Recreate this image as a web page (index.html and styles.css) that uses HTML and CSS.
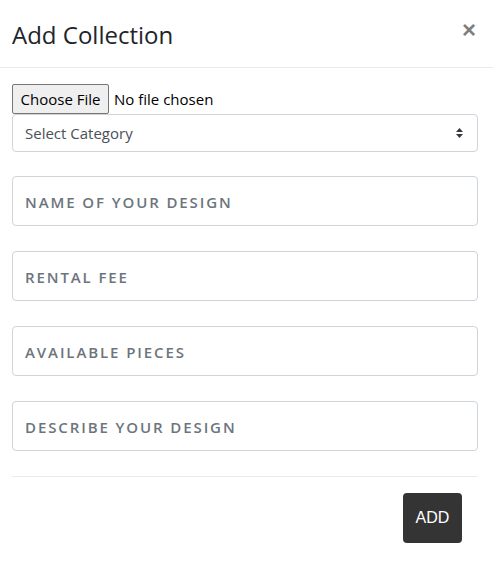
FILE: index.html
```html
<!DOCTYPE html>
<html>
<head>
<meta charset="utf-8">
<link rel="stylesheet" href="styles.css">
</head>
<body>
<div class="modal">
  <div class="modal-header">
    <h5 class="modal-title">Add Collection</h5>
    <button class="close" type="button">&times;</button>
  </div>
  <div class="modal-body">
    <div class="file-row">
      <span class="file-btn">Choose File</span>
      <span class="file-text">No file chosen</span>
    </div>
    <div class="select">
      <span>Select Category</span>
      <svg class="arrows" width="7" height="10" viewBox="0 0 7 10"><path d="M3.5 0 L7 4 H0 Z M0 6 H7 L3.5 10 Z" fill="#343a40"/></svg>
    </div>
    <div class="field first">NAME OF YOUR DESIGN</div>
    <div class="field">RENTAL FEE</div>
    <div class="field">AVAILABLE PIECES</div>
    <div class="field">DESCRIBE YOUR DESIGN</div>
    <div class="footer">
      <button class="add" type="button">ADD</button>
    </div>
  </div>
</div>
</body>
</html>
```

FILE: styles.css
```css
* { box-sizing: border-box; }
html, body { margin: 0; padding: 0; background: #fff; }
body {
  font-family: "Open Sans", "Noto Sans", sans-serif;
  color: #212529;
}
.modal { width: 493px; }
.modal-header {
  display: flex;
  justify-content: space-between;
  align-items: flex-start;
  height: 68px;
  padding: 17px 12px 0 12px;
  border-bottom: 1px solid #e9ecef;
}
.modal-title {
  margin: 0;
  font-size: 24px;
  font-weight: 500;
  line-height: 36px;
  color: #212529;
}
.close {
  border: 0;
  background: none;
  padding: 0;
  margin: -1px 5px 0 0;
  font-family: "Liberation Sans", sans-serif;
  font-size: 24px;
  font-weight: 700;
  line-height: 28px;
  color: #000;
  opacity: .5;
}
.modal-body { padding: 16px 15px 0 12px; }
.file-row {
  display: flex;
  align-items: center;
  height: 30px;
  font-size: 15px;
}
.file-btn {
  height: 30px;
  width: 97px;
  display: flex;
  align-items: center;
  justify-content: center;
  background: #efefef;
  border: 1px solid #767676;
  border-radius: 2px;
  color: #000;
}
.file-text { margin-left: 5px; color: #000; }
.select {
  height: 38px;
  border: 1px solid #ced4da;
  border-radius: 4px;
  display: flex;
  align-items: center;
  justify-content: space-between;
  padding: 0 14px 0 12px;
  font-size: 15px;
  color: #495057;
}
.field {
  margin-top: 25px;
  height: 50px;
  border: 1px solid #ced4da;
  border-radius: 4px;
  display: flex;
  align-items: center;
  padding: 2px 12px 0 12px;
  font-size: 15px;
  font-weight: 600;
  letter-spacing: 1.9px;
  color: #6c757d;
}
.field.first { margin-top: 24px; }
.footer {
  margin-top: 25px;
  border-top: 1px solid #e9ecef;
  padding: 16px 16px 0 0;
  display: flex;
  justify-content: flex-end;
}
.add {
  width: 59px;
  height: 50px;
  border: 0;
  border-radius: 4px;
  background: #343434;
  color: #fff;
  font-family: "Liberation Sans", sans-serif;
  font-size: 16px;
  padding: 0;
}
```
